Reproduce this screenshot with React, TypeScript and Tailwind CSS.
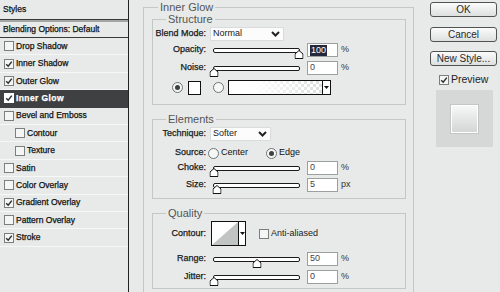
import React from "react";

type StyleItem = { label: string; checked?: boolean; active?: boolean; sub?: boolean };

const styleItems: StyleItem[] = [
  { label: "Drop Shadow" },
  { label: "Inner Shadow", checked: true },
  { label: "Outer Glow", checked: true },
  { label: "Inner Glow", checked: true, active: true },
  { label: "Bevel and Emboss" },
  { label: "Contour", sub: true },
  { label: "Texture", sub: true },
  { label: "Satin" },
  { label: "Color Overlay" },
  { label: "Gradient Overlay", checked: true },
  { label: "Pattern Overlay" },
  { label: "Stroke", checked: true },
];

function Check({ checked, light }: { checked?: boolean; light?: boolean }) {
  return (
    <span
      className={`flex h-[10px] w-[10px] shrink-0 items-center justify-center border ${
        light ? "border-white bg-white" : "border-[#7b7f7d] bg-[#f4f6f5]"
      }`}
    >
      {checked && (
        <svg width="8" height="8" viewBox="0 0 8 8">
          <path d="M1.2 4.2 L3.2 6.2 L6.8 1.6" fill="none" stroke="#2d3030" strokeWidth="1.5" />
        </svg>
      )}
    </span>
  );
}

function Radio({ on }: { on?: boolean }) {
  return (
    <span className="flex h-[11px] w-[11px] shrink-0 items-center justify-center rounded-full border border-[#6f7472] bg-[#f6f7f7]">
      {on && <span className="h-[5px] w-[5px] rounded-full bg-[#3b4140]" />}
    </span>
  );
}

function Chevron() {
  return (
    <svg width="9" height="6" viewBox="0 0 9 6">
      <path d="M1 1 L4.5 4.5 L8 1" fill="none" stroke="#222" strokeWidth="2" />
    </svg>
  );
}

function DownTri() {
  return (
    <svg width="5" height="3" viewBox="0 0 5 3">
      <path d="M0 0 H5 L2.5 3 Z" fill="#111" />
    </svg>
  );
}

function Select({ value, width }: { value: string; width: string }) {
  return (
    <div
      className={`ml-[4px] flex h-[14px] ${width} shrink-0 items-center justify-between border border-[#d9dcdb] bg-[#fcfcfc] pl-[2px] pr-[3px] text-[9px] text-[#222]`}
    >
      <span>{value}</span>
      <Chevron />
    </div>
  );
}

function Slider({ pct }: { pct: number }) {
  return (
    <div className="relative ml-[7px] h-[5px] w-[87px] shrink-0 rounded-[2px] border border-[#1b1b1b] bg-white">
      <svg
        className="absolute top-[1px] -translate-x-1/2"
        style={{ left: `${pct}%` }}
        width="9"
        height="9"
        viewBox="0 0 9 9"
      >
        <path d="M0.5 8.5 V4 L4.5 0.5 L8.5 4 V8.5 Z" fill="#fff" stroke="#111" />
      </svg>
    </div>
  );
}

function Num({ value, selected }: { value: string; selected?: boolean }) {
  return (
    <div className="ml-[7px] flex h-[14px] w-[31px] shrink-0 items-center border border-[#9b9f9d] bg-white pl-[2px] text-[9px] text-[#444]">
      {selected ? (
        <span className="bg-[#23283a] px-[1px] leading-[11px] text-white">{value}</span>
      ) : (
        value
      )}
    </div>
  );
}

function Row({
  label,
  className = "",
  children,
}: {
  label: string;
  className?: string;
  children: React.ReactNode;
}) {
  return (
    <div className={`flex items-center ${className}`}>
      <span className="w-[53px] shrink-0 text-right text-[9px] text-[#1a1a1a] [-webkit-text-stroke:0.25px_#1a1a1a]">
        {label}
      </span>
      {children}
    </div>
  );
}

function SliderRow({
  label,
  pct,
  value,
  unit = "%",
  selected,
  className = "",
}: {
  label: string;
  pct: number;
  value: string;
  unit?: string;
  selected?: boolean;
  className?: string;
}) {
  return (
    <Row label={label} className={`h-[14px] ${className}`}>
      <Slider pct={pct} />
      <Num value={value} selected={selected} />
      <span className="ml-[3px] text-[9px] text-[#333]">{unit}</span>
    </Row>
  );
}

function Group({
  title,
  className = "",
  children,
}: {
  title: string;
  className?: string;
  children: React.ReactNode;
}) {
  return (
    <fieldset className={`border border-[#c3c7c5] ${className}`}>
      <legend className="ml-[13px] px-[2px] text-[11px] leading-[12px] text-[#555]">{title}</legend>
      {children}
    </fieldset>
  );
}

function Button({ label, className = "" }: { label: string; className?: string }) {
  return (
    <div
      className={`flex h-[15px] w-full items-center justify-center rounded-[3px] border border-[#4f5352] bg-gradient-to-b from-[#fbfbfb] to-[#dde0df] text-[10px] leading-none text-[#2a2a2a] ${className}`}
    >
      {label}
    </div>
  );
}

export default function App() {
  return (
    <div className="flex h-[292px] w-[500px] overflow-hidden bg-[#e7eae9] font-['Liberation_Sans',Arial,sans-serif] text-[#111]">
      {/* styles list */}
      <div className="flex h-full w-[129px] shrink-0 flex-col border-r border-[#222] text-[8.5px] [-webkit-text-stroke:0.25px_currentColor]">
        <div className="flex h-[20px] items-center border-b border-[#3a3a3a] pl-[3px]">Styles</div>
        <div className="h-[2px] bg-[#a3a6a5]" />
        <div className="flex h-[16px] items-center border-b border-[#3a3a3a] pl-[3px]">
          Blending Options: Default
        </div>
        {styleItems.map((s) => (
          <div
            key={s.label}
            className={`flex h-[17.42px] items-center gap-[2px] border-b ${
              s.sub ? "pl-[15px]" : "pl-[4px]"
            } ${
              s.active
                ? "border-[#3e4041] bg-[#3e4041] font-bold tracking-[0.4px] text-white"
                : "border-[#f6f7f7]"
            }`}
          >
            <Check checked={s.checked} light={s.active} />
            <span>{s.label}</span>
          </div>
        ))}
      </div>

      {/* main options */}
      <fieldset className="ml-[14px] mt-[1px] h-[330px] w-[271px] shrink-0 border border-[#c3c7c5] pl-[8px] pr-[7px]">
        <legend className="ml-[6px] px-[2px] text-[11px] leading-[12px] text-[#555]">Inner Glow</legend>

        <Group title="Structure" className="pb-[9px] pt-[2px]">
          <Row label="Blend Mode:" className="h-[14px]">
            <Select value="Normal" width="w-[74px]" />
          </Row>
          <SliderRow label="Opacity:" pct={100} value="100" selected className="mt-[2px]" />
          <SliderRow label="Noise:" pct={0} value="0" className="mt-[4px]" />
          <div className="mt-[5px] flex h-[15px] items-center pl-[19px]">
            <Radio on />
            <span className="ml-[5px] h-[14px] w-[13px] border border-[#111] bg-white" />
            <span className="ml-[12px]">
              <Radio />
            </span>
            <div className="ml-[4px] flex h-[15px] w-[103px] border border-[#111]">
              <div className="flex-1 bg-[image:repeating-conic-gradient(#d6d9d8_0%_25%,#ffffff_0%_50%)] bg-[length:6px_6px]">
                <div className="h-full w-full bg-[image:linear-gradient(to_right,#ffffff_25%,rgba(255,255,255,0.15))]" />
              </div>
              <div className="flex w-[8px] items-center justify-center border-l border-[#111] bg-white">
                <DownTri />
              </div>
            </div>
          </div>
        </Group>

        <Group title="Elements" className="mt-[8px] pb-[6px] pt-[2px]">
          <Row label="Technique:" className="h-[14px]">
            <Select value="Softer" width="w-[61px]" />
          </Row>
          <Row label="Source:" className="mt-[5px] h-[14px] text-[9px]">
            <span className="ml-[2px]">
              <Radio />
            </span>
            <span className="ml-[2px]">Center</span>
            <span className="ml-[18px]">
              <Radio on />
            </span>
            <span className="ml-[2px]">Edge</span>
          </Row>
          <SliderRow label="Choke:" pct={0} value="0" className="mt-[1px]" />
          <SliderRow label="Size:" pct={4} value="5" unit="px" className="mt-[3px]" />
        </Group>

        <Group title="Quality" className="mt-[8px] pb-[4px] pt-[2px]">
          <Row label="Contour:" className="h-[25px]">
            <div className="ml-[5px] flex h-[25px] w-[35px] shrink-0 border border-[#111] bg-white">
              <svg width="26" height="23" viewBox="0 0 26 23" preserveAspectRatio="none">
                <path d="M0 23 L26 0 V23 Z" fill="#c0c4c2" />
              </svg>
              <div className="flex w-[7px] items-center justify-center border-l border-[#111]">
                <DownTri />
              </div>
            </div>
            <span className="ml-[13px]">
              <Check />
            </span>
            <span className="ml-[2px] text-[9px] text-[#222]">Anti-aliased</span>
          </Row>
          <SliderRow label="Range:" pct={50} value="50" className="mt-[6px]" />
          <SliderRow label="Jitter:" pct={0} value="0" className="mt-[4px]" />
        </Group>
      </fieldset>

      {/* buttons */}
      <div className="ml-[16px] flex w-[67px] shrink-0 flex-col pt-[2px]">
        <Button label="OK" />
        <Button label="Cancel" className="mt-[10px]" />
        <Button label="New Style..." className="mt-[9px]" />
        <div className="mt-[8px] flex h-[11px] items-center pl-[9px] text-[10.5px] text-[#222]">
          <Check checked />
          <span className="ml-[2px]">Preview</span>
        </div>
        <div className="ml-[6px] mt-[5px] flex h-[57px] w-[57px] items-center justify-center bg-[#d6d8d7]">
          <div className="h-[30px] w-[29px] border border-[#c3c6c5] bg-gradient-to-b from-[#f8f9f9] to-[#d2d5d4] shadow-[inset_0_0_0_1px_#ffffff]" />
        </div>
      </div>
    </div>
  );
}
